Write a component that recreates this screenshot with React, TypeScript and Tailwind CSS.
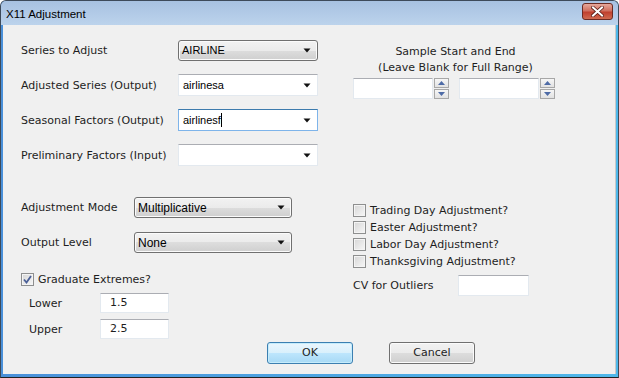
import React from 'react';

const ui = "font-['DejaVu_Sans',sans-serif] text-[11px] text-[#1e1e1e]";
const btnBg =
    'bg-[linear-gradient(to_bottom,#f2f2f2_0%,#ebebeb_50%,#dddddd_50%,#cfcfcf_100%)] border border-[#707070] rounded-[3px] shadow-[inset_0_0_0_1px_#fbfbfb]';

function Arrow() {
    return (
        <svg width="8" height="5" viewBox="0 0 8 5" className="shrink-0">
            <path d="M0.5 0.5 H7.5 L4 4.5 Z" fill="#111" />
        </svg>
    );
}

function DropButton({ value, w, h, size }: { value: string; w: string; h: string; size: string }) {
    return (
        <div className={`${w} ${h} ${btnBg} flex items-center pl-[3px] pr-[6px]`}>
            <span className={`flex-1 font-['Liberation_Sans',sans-serif] ${size} text-black`}>{value}</span>
            <Arrow />
        </div>
    );
}

function EditCombo({ value, focused, caret }: { value: string; focused?: boolean; caret?: boolean }) {
    return (
        <div
            className={`w-[140px] h-[22px] bg-white border flex items-center pl-[4px] pr-[6px] ${
                focused
                    ? 'border-[#7eb4ea] border-t-[#3d7bad]'
                    : 'border-[#e3e9ef] border-t-[#abadb3]'
            }`}
        >
            <span className="flex-1 flex items-center font-['Liberation_Sans',sans-serif] text-[11px] text-black">
                {value}
                {caret && <span className="inline-block w-px h-[14px] bg-black" />}
            </span>
            <Arrow />
        </div>
    );
}

function TextBox({ value, w, h }: { value?: string; w: string; h: string }) {
    return (
        <div className={`${w} ${h} bg-white border border-[#e3e9ef] border-t-[#abadb3] flex items-center pl-[9px] pt-[1px]`}>
            {value}
        </div>
    );
}

function SpinBtn({ up }: { up?: boolean }) {
    return (
        <div className="w-[15px] h-[10px] border border-[#a7a7a7] bg-[linear-gradient(to_bottom,#f6f6f6,#e2e2e2)] flex items-center justify-center">
            <svg width="7" height="4" viewBox="0 0 7 4">
                <path d={up ? 'M0 4 H7 L3.5 0 Z' : 'M0 0 H7 L3.5 4 Z'} fill="#4e6ba6" />
            </svg>
        </div>
    );
}

function Spin() {
    return (
        <div className="flex items-start">
            <TextBox w="w-[80px]" h="h-[21px]" />
            <div className="ml-[1px] flex flex-col gap-[1px]">
                <SpinBtn up />
                <SpinBtn />
            </div>
        </div>
    );
}

function Check({ checked, label }: { checked?: boolean; label: string }) {
    return (
        <div className="flex items-center gap-[4px]">
            <div className="w-[13px] h-[13px] border border-[#8e8f8f] bg-[linear-gradient(135deg,#d6d6d6,#f7f7f7)] shadow-[inset_0_0_0_1px_#f4f4f4] flex items-center justify-center">
                {checked && (
                    <svg width="9" height="9" viewBox="0 0 9 9">
                        <path d="M1 4.5 L3.5 7.5 L8 1" fill="none" stroke="#4a5f97" strokeWidth="1.8" />
                    </svg>
                )}
            </div>
            <span className="pt-[2px]">{label}</span>
        </div>
    );
}

export default function App() {
    return (
        <div className="w-[619px] h-[378px] border border-[#3d4a5a] border-b-[#222] rounded-t-[6px] bg-[linear-gradient(to_right,#4a90d9,#4fb8ea)] flex flex-col overflow-hidden">
            {/* title bar */}
            <div className="h-[24px] shrink-0 bg-[linear-gradient(to_bottom,#a7c1e1,#bcd3ec)] flex items-center pl-[5px] pr-[5px]">
                <span className="flex-1 pt-[3px] font-['Liberation_Sans',sans-serif] text-[11.5px] text-black">X11 Adjustment</span>
                <div className="w-[31px] h-[17px] mt-[-3px] rounded-[3px] border border-[#6b2a22] bg-[linear-gradient(to_bottom,#e6a89c_0%,#d0705f_45%,#c0402e_55%,#d06a50_100%)] flex items-center justify-center">
                    <svg width="13" height="11" viewBox="0 0 13 11">
                        <path d="M2 1.5 L11 9.5 M11 1.5 L2 9.5" stroke="#5a1f18" strokeWidth="3.6" strokeLinecap="square" />
                        <path d="M2 1.5 L11 9.5 M11 1.5 L2 9.5" stroke="#ffffff" strokeWidth="2" strokeLinecap="square" />
                    </svg>
                </div>
            </div>

            {/* body */}
            <div className="flex-1 mx-[2px] mb-[3px] bg-[#f0f0f0] border-r border-[#c9c9c9]">
                <div className={`${ui} pl-[18px] pt-[14px]`}>
                    {/* top section */}
                    <div className="flex">
                        <div className="flex flex-col gap-[13px]">
                            <div className="h-[22px] flex items-center">
                                <span className="w-[157px] pt-[3px]">Series to Adjust</span>
                                <DropButton value="AIRLINE" w="w-[140px]" h="h-[21px]" size="text-[11px]" />
                            </div>
                            <div className="h-[22px] flex items-center">
                                <span className="w-[157px] pt-[3px]">Adjusted Series (Output)</span>
                                <EditCombo value="airlinesa" />
                            </div>
                            <div className="h-[22px] flex items-center">
                                <span className="w-[157px] pt-[3px]">Seasonal Factors (Output)</span>
                                <EditCombo value="airlinesf" focused caret />
                            </div>
                            <div className="h-[22px] flex items-center">
                                <span className="w-[157px] pt-[3px]">Preliminary Factors (Input)</span>
                                <EditCombo value="" />
                            </div>
                        </div>

                        <div className="ml-[35px] w-[205px] pt-[5px] flex flex-col">
                            <div className="text-center leading-[16px]">
                                Sample Start and End
                                <br />
                                (Leave Blank for Full Range)
                            </div>
                            <div className="mt-[2px] flex gap-[10px]">
                                <Spin />
                                <Spin />
                            </div>
                        </div>
                    </div>

                    {/* bottom section */}
                    <div className="mt-[31px] flex">
                        <div className="w-[332px] flex flex-col">
                            <div className="h-[21px] flex items-center">
                                <span className="w-[113px] pt-[2px]">Adjustment Mode</span>
                                <DropButton value="Multiplicative" w="w-[158px]" h="h-[21px]" size="text-[12px]" />
                            </div>
                            <div className="mt-[14px] h-[21px] flex items-center">
                                <span className="w-[113px] pt-[2px]">Output Level</span>
                                <DropButton value="None" w="w-[158px]" h="h-[21px]" size="text-[12px]" />
                            </div>
                            <div className="mt-[17px] h-[18px] flex items-center">
                                <Check checked label="Graduate Extremes?" />
                            </div>
                            <div className="mt-[5px] h-[20px] flex items-center pl-[8px]">
                                <span className="w-[71px] pt-[3px]">Lower</span>
                                <TextBox value="1.5" w="w-[69px]" h="h-[20px]" />
                            </div>
                            <div className="mt-[6px] h-[20px] flex items-center pl-[8px]">
                                <span className="w-[71px] pt-[3px]">Upper</span>
                                <TextBox value="2.5" w="w-[69px]" h="h-[20px]" />
                            </div>
                        </div>

                        <div className="pt-[5px] flex flex-col">
                            <div className="h-[17px] flex items-center"><Check label="Trading Day Adjustment?" /></div>
                            <div className="h-[17px] flex items-center"><Check label="Easter Adjustment?" /></div>
                            <div className="h-[17px] flex items-center"><Check label="Labor Day Adjustment?" /></div>
                            <div className="h-[17px] flex items-center"><Check label="Thanksgiving Adjustment?" /></div>
                            <div className="mt-[5px] h-[21px] flex items-center">
                                <span className="w-[105px] pt-[2px]">CV for Outliers</span>
                                <TextBox w="w-[71px]" h="h-[21px]" />
                            </div>
                        </div>
                    </div>

                    {/* buttons */}
                    <div className="mt-[3px] flex pl-[246px]">
                        <div className="w-[86px] h-[22px] pt-[1px] rounded-[3px] border border-[#3c7fb1] bg-[linear-gradient(to_bottom,#eaf6fd_0%,#d9f0fc_50%,#bee6fd_50%,#a7d9f5_100%)] shadow-[inset_0_0_0_1px_#c5ecfc] flex items-center justify-center">
                            OK
                        </div>
                        <div className={`ml-[36px] w-[86px] h-[22px] pt-[1px] ${btnBg} flex items-center justify-center`}>
                            Cancel
                        </div>
                    </div>
                </div>
            </div>
        </div>
    );
}
